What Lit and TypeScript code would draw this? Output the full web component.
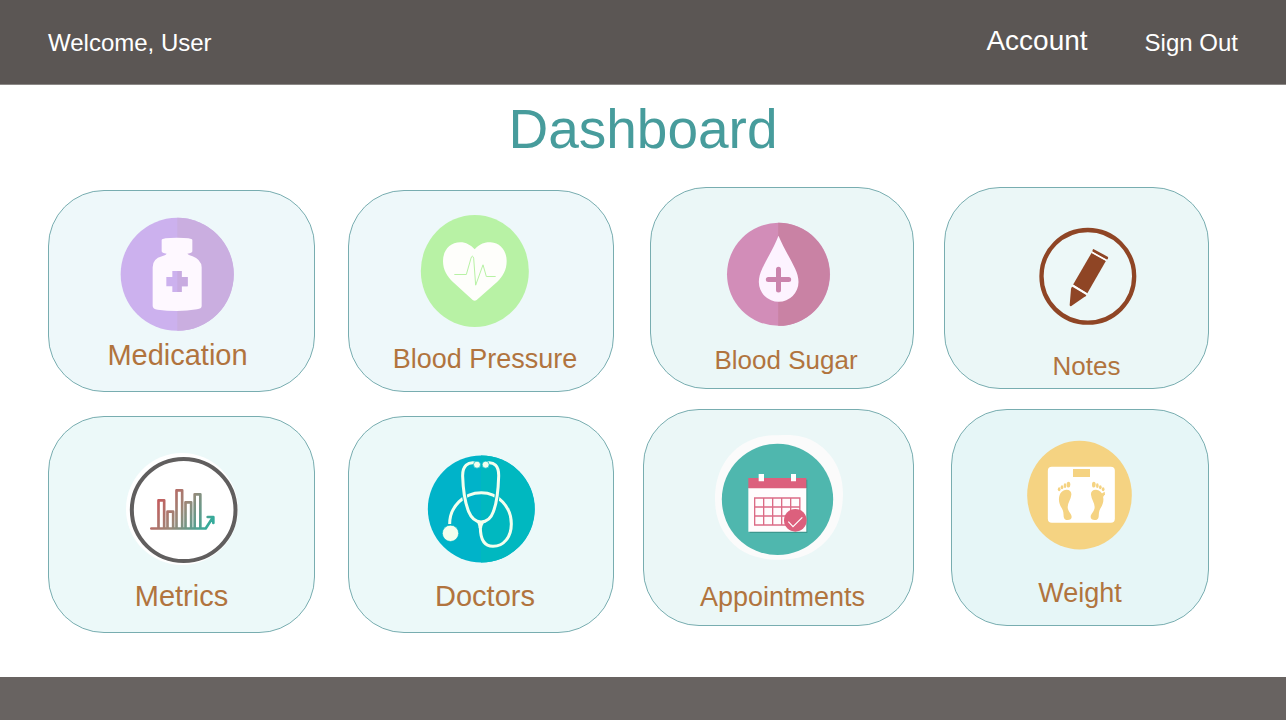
import { LitElement, html, svg, css } from "lit";
import { customElement, property } from "lit/decorators.js";
import { classMap } from "lit/directives/class-map.js";

type Tile = {
  label: string;
  tone: string;
  size: "small" | "medium" | "large";
  base: "low" | "mid" | "raised" | "high";
  align?: "start" | "end" | "far";
  inset?: boolean;
  viewBox: string;
  art: unknown;
};

const medication = svg`
  <circle cx="412.5" cy="283" r="169.5" fill="#ccb1ee"/>
  <path d="M413 113.500a169.500 169.500 0 0 1 0 339z" fill="#caaee0"/>
  <path d="M366 180q0-7 46-7t46 7v34q0 5-15 7q5 5 14 7q28 10 29 34v116q0 8-14 10q-30 5-60 5t-58-4q-15-2-15-11V262q0-26 28-33q11-3 14-8q-15-2-15-7z" fill="#fef8ff"/>
  <path d="M398 273h28v18h18v28h-18v17h-28v-17h-18v-28h18z" fill="#ccb1ee"/>
  <path d="M413 273h13v18h18v28h-18v17h-13z" fill="#c8abe0"/>`;

const bloodPressure = svg`
  <ellipse cx="404.500" cy="273" rx="162" ry="168" fill="#b8f2a5"/>
  <path d="M404 208c18-20 37-22 48-21c30 2 48 26 48 56c0 28-12 46-28 62l-62 55q-6 5-12 0l-60-55c-16-16-29-34-29-62c0-32 21-56 52-56c17 0 31 8 43 21z" fill="#fefefb"/>
  <path d="M343 283.500h36l14-49q4-12 8 0l6 81l22-61l10 35h28" fill="none" stroke="#b8f2a5" stroke-width="3"/>`;

const bloodSugar = svg`
  <circle cx="415.500" cy="283" r="154.500" fill="#d28db8"/>
  <path d="M414.500 128.500a154.500 154.500 0 0 1 0 309z" fill="#c982a4"/>
  <path d="M415.500 167c14 34 36 70 50 99c6 13 10 26 10 40a59.500 59.500 0 0 1-119 0c0-14 4-27 10-40c14-29 36-65 49-99z" fill="#fdf3ff"/>
  <path d="M415.500 268v62M385 298.500h61" stroke="#cb84ad" stroke-width="15" stroke-linecap="round"/>`;

const notes = svg`
  <circle cx="443.500" cy="289" r="139" fill="#edf8f8" stroke="#8f4525" stroke-width="13"/>
  <g fill="#8f4525">
    <path d="M460 207l43 23q3 3 0 7q-2 3-6 1l-38-21q-3-3-1-7q1-3 2-3z"/>
    <path d="M455 218l43 24l-56 98l-43-26z"/>
    <path d="M397 320l42 25q0 5-6 6l-40 28q-4 0-4-4l4-48q1-6 4-7z"/>
  </g>
  <path d="M398 316l42 26M456 217l43 24" stroke="#fff" stroke-width="5"/>`;

const metrics = svg`
  <defs>
    <linearGradient id="trend" gradientUnits="userSpaceOnUse" x1="345" y1="270" x2="500" y2="372">
      <stop offset="0" stop-color="#cd5358"/>
      <stop offset="0.500" stop-color="#9b8878"/>
      <stop offset="1" stop-color="#35ab9b"/>
    </linearGradient>
  </defs>
  <ellipse cx="427" cy="312" rx="168" ry="168" fill="#fff"/>
  <ellipse cx="432" cy="315" rx="155.500" ry="153" fill="#fff" stroke="#605e5e" stroke-width="12"/>
  <path d="M335 370.500h163l20-31M504 336h17v18M356.500 369v-83h17v83M383.500 369v-49h17v49M410.500 369v-113h17v113M437.500 369v-77h17v77M465 369v-101h17v101" fill="none" stroke="url(#trend)" stroke-width="8" stroke-linejoin="round" stroke-linecap="round"/>`;

const doctors = svg`
  <circle cx="424" cy="312" r="160.500" fill="#00b3c9"/>
  <path d="M423 151.500a160.500 160.500 0 0 1 0 321z" fill="#00b8c0"/>
  <path d="M329 357c0-52 42-94 95-94c51 0 90 43 90 94c0 38-22 67-55 67c-28 0-38-24-38-58v-14" fill="none" stroke="#f3ffee" stroke-width="9"/>
  <path d="M410 178c-28-8-43 7-42 36c1 34 7 78 18 106c7 17 18 30 37 31c19-1 31-14 37-31c11-28 15-72 16-106c1-29-12-44-40-36" fill="none" stroke="#00b5c5" stroke-width="15"/>
  <path d="M410 175c-27-7-43 8-42 39c1 34 7 78 18 106c7 17 18 30 37 31c19-1 31-14 37-31c11-28 15-72 16-106c1-31-13-46-40-39" fill="none" stroke="#f3ffee" stroke-width="9"/>
  <path d="M404 342q19 14 38 0q-15 13-16 28h-10q-1-17-12-28z" fill="#f3ffee"/>
  <g fill="#f3ffee" stroke="#00b5c5" stroke-width="2">
    <circle cx="411" cy="179" r="10.500"/>
    <circle cx="437" cy="179" r="10.500"/>
    <circle cx="331.500" cy="385" r="24.500"/>
  </g>`;

const appointments = svg`
  <path d="M432 106c42-3 82 2 116 25c45 30 76 83 76 149c0 75-28 134-80 168c-32 24-70 31-112 31s-88-8-122-34c-44-34-70-84-70-147c0-75 30-132 84-166c36-22 68-27 108-26z" fill="#fbfbfb"/>
  <circle cx="427.500" cy="298" r="167" fill="#4fb7ae"/>
  <path d="M344 239h173v160H344z" fill="#3d988f"/>
  <path d="M340 264h174v131H340z" fill="#fffcfd"/>
  <path d="M340 234h174v31H340z" fill="#dc607d"/>
  <path d="M371 222h16v22h-16zM468 222h15v22h-15z" fill="#fff"/>
  <path d="M359 294h135.500v81H359zM359 321h135.500M359 348h135.500M386 294v81M413 294v81M440 294v81M467 294v81" fill="none" stroke="#dc6b86" stroke-width="4"/>
  <circle cx="481" cy="361" r="34" fill="#dc607d"/>
  <path d="M460 365l14 15l28-28" fill="none" stroke="#fff" stroke-width="3.500"/>`;

const foot = svg`
  <path d="M376 270c11-2 19 4 18 14c-1 13-11 25-11 37c0 14 12 19 12 30c0 6-5 9-12 9s-11-3-12-10c-1-11 0-16-6-26c-6-9-9-19-8-29c1-14 8-23 19-25z"/>
  <ellipse cx="385.500" cy="254" rx="5.500" ry="8.500"/>
  <ellipse cx="375" cy="257" rx="4" ry="7"/>
  <ellipse cx="366" cy="262" rx="4" ry="6"/>
  <ellipse cx="357.500" cy="268" rx="4" ry="6"/>`;

const weight = svg`
  <ellipse cx="418.500" cy="285.500" rx="157" ry="163" fill="#f5d382"/>
  <rect x="323.500" y="200.500" width="201" height="168" rx="12" fill="#fff"/>
  <rect x="399" y="207" width="51" height="24" fill="#f5d382"/>
  <g fill="#f5d382">
    ${foot}
    <g transform="translate(847 0) scale(-1 1)">${foot}</g>
    <path d="M483 282l11-7l1 8l-6 8z"/>
  </g>`;

const daily: Tile[] = [
  { label: "Medication", tone: "mist", size: "large", base: "high", align: "start", viewBox: "67 33 720 432", art: medication },
  { label: "Blood Pressure", tone: "mist", size: "medium", base: "raised", align: "end", viewBox: "63 33 720 432", art: bloodPressure },
  { label: "Metrics", tone: "foam", size: "large", base: "high", viewBox: "67 36 720 468", art: metrics },
  { label: "Doctors", tone: "foam", size: "large", base: "high", align: "end", viewBox: "63 36 720 468", art: doctors },
];

const records: Tile[] = [
  { label: "Blood Sugar", tone: "pale", size: "small", base: "mid", align: "end", inset: true, viewBox: "66 24 720 432", art: bloodSugar },
  { label: "Notes", tone: "pale", size: "small", base: "low", align: "far", viewBox: "51 24 720 432", art: notes },
  { label: "Appointments", tone: "pale", size: "medium", base: "mid", align: "end", viewBox: "72 30 720 468", art: appointments },
  { label: "Weight", tone: "aqua", size: "medium", base: "raised", inset: true, viewBox: "60 30 720 468", art: weight },
];

@customElement("dashboard-tile")
export class DashboardTile extends LitElement {
  @property({ attribute: false }) tile!: Tile;

  static styles = css`
    :host {
      display: grid;
      min-width: 0;
    }
    .card {
      box-sizing: border-box;
      display: flex;
      flex-direction: column;
      align-items: center;
      justify-content: space-between;
      border: 1px solid #78adb0;
      border-radius: 56px;
      color: #b1743e;
      text-decoration: none;
    }
    .art {
      display: block;
      width: 240px;
      max-width: 100%;
    }
    .mist { background: #eef8fa; }
    .foam { background: #ecf9f9; }
    .pale { background: #ebf7f7; }
    .aqua { background: #e6f6f7; }
    .low { padding-bottom: 6px; }
    .mid { padding-bottom: 12px; }
    .raised { padding-bottom: 16px; }
    .high { padding-bottom: 20px; }
    .label {
      line-height: 32px;
      white-space: nowrap;
    }
    .small { font-size: 26px; }
    .medium { font-size: 27px; }
    .large { font-size: 29px; }
    .start { padding-right: 8px; }
    .end { padding-left: 8px; }
    .far { padding-left: 20px; }
  `;

  render() {
    const { label, tone, size, base, align, viewBox, art } = this.tile;
    return html`
      <a class=${classMap({ card: true, [tone]: true, [base]: true })} href="#">
        <svg class="art" viewBox=${viewBox} aria-hidden="true">${art}</svg>
        <span class=${classMap({ label: true, [size]: true, [align ?? "centre"]: true })}>${label}</span>
      </a>
    `;
  }
}

@customElement("app-root")
export class AppRoot extends LitElement {
  static styles = css`
    :host {
      display: flex;
      flex-direction: column;
      min-height: 100vh;
      background: #fff;
      font-family: "Liberation Sans", Arial, sans-serif;
    }
    .bar {
      display: flex;
      align-items: flex-end;
      justify-content: space-between;
      padding: 23px 48px 26px;
      border-bottom: 1px solid #8b8886;
      background: #5b5654;
      color: #fff;
      font-size: 24px;
      line-height: 1.25;
    }
    .links {
      display: flex;
      align-items: flex-end;
      gap: 57px;
    }
    .link {
      color: inherit;
      text-decoration: none;
    }
    .account { font-size: 28px; }
    .title {
      margin: 12px 0 26px;
      color: #479c9c;
      font-size: 55px;
      font-weight: 400;
      line-height: 64px;
      text-align: center;
    }
    .tiles {
      display: grid;
      grid-template-columns: 1fr 1fr;
      align-items: start;
      gap: 29px;
      padding: 0 77px 44px 48px;
    }
    .group {
      display: grid;
      grid-template-rows: minmax(202px, auto) minmax(217px, auto);
    }
    .daily {
      grid-template-columns: 267fr 266fr;
      gap: 24px 33px;
      padding-top: 3px;
    }
    .records {
      grid-template-columns: 271fr 265fr;
      gap: 20px 30px;
    }
    .inset {
      margin-left: 7px;
    }
    .foot {
      height: 43px;
      margin-top: auto;
      background: #686361;
    }
  `;

  private group(name: string, tiles: Tile[]) {
    return html`
      <div class="group ${name}">
        ${tiles.map((tile) => html`<dashboard-tile class=${classMap({ inset: !!tile.inset })} .tile=${tile}></dashboard-tile>`)}
      </div>
    `;
  }

  render() {
    return html`
      <header class="bar">
        <span>Welcome, User</span>
        <nav class="links">
          <a class="link account" href="#">Account</a>
          <a class="link" href="#">Sign Out</a>
        </nav>
      </header>
      <h1 class="title">Dashboard</h1>
      <main class="tiles">
        ${this.group("daily", daily)}
        ${this.group("records", records)}
      </main>
      <footer class="foot"></footer>
    `;
  }
}
